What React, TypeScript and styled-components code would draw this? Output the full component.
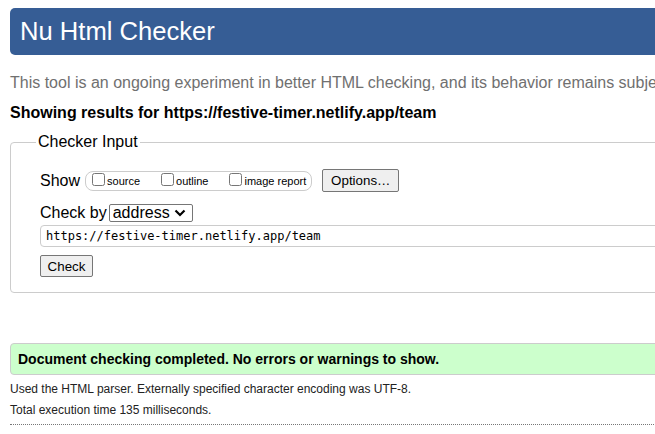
import React from 'react';
import styled, { createGlobalStyle } from 'styled-components';

const GlobalStyle = createGlobalStyle`
  html, body {
    margin: 0;
    padding: 0;
    overflow: hidden;
    background: #fff;
  }
  body {
    font-family: "Liberation Sans", Arial, sans-serif;
    color: #000;
  }
`;

const Page = styled.div`
  width: 1100px;
  padding: 8px 0 0 10px;
`;

const Title = styled.h1`
  margin: 0;
  background: #365d95;
  color: #fff;
  border-radius: 5px;
  font-size: 25.6px;
  font-weight: normal;
  line-height: 29px;
  padding: 9px 10px;
`;

const Intro = styled.p`
  margin: 19px 0 0;
  font-size: 16px;
  line-height: 18px;
  color: #707070;
  white-space: nowrap;
`;

const ResultsFor = styled.p`
  margin: 12px 0 0;
  font-size: 16px;
  line-height: 18px;
  font-weight: bold;
`;

const Fieldset = styled.fieldset`
  margin: 11px 0 0;
  padding: 18px 0 15px 29px;
  border: 1px solid #cccccc;
  border-radius: 4px;
  min-width: 0;
`;

const Legend = styled.legend`
  font-size: 16px;
  padding: 0 2px;
  margin-left: -4px;
  line-height: 18px;
`;

const Row = styled.div<{ $top?: number }>`
  display: flex;
  align-items: center;
  font-size: 16px;
  margin-top: ${({ $top }) => $top || 0}px;
`;

const RowLabel = styled.span<{ $gap?: number }>`
  font-size: 16px;
  margin-right: ${({ $gap }) => ($gap === undefined ? 5 : $gap)}px;
`;

const OptionPill = styled.span`
  display: inline-flex;
  align-items: center;
  height: 18px;
  border: 1px solid #cccccc;
  border-radius: 8px;
  padding: 0 5px 0 3px;
  font-size: 11px;
`;

const OptionLabel = styled.label<{ $gap: number }>`
  display: inline-flex;
  align-items: center;
  margin-right: ${({ $gap }) => $gap}px;
  margin-top: 1px;

  input {
    margin: 0 2px 3px 3px;
    width: 13px;
    height: 13px;
  }
`;

const Button = styled.button`
  font-family: "Liberation Sans", Arial, sans-serif;
  font-size: 13.33px;
  color: #000;
  background: #efefef;
  border: 1px solid #767676;
  border-radius: 2px;
  padding: 0 6px;
  height: 23px;
  line-height: 19px;
`;

const OptionsButton = styled(Button)`
  margin-left: 10px;
  width: 77px;
`;

const Select = styled.select`
  font-family: "Liberation Sans", Arial, sans-serif;
  font-size: 16px;
  width: 84px;
  height: 18px;
  padding: 0 0 0 3px;
  border: 1px solid #767676;
  border-radius: 2px;
  color: #000;
  background: #fff;
  appearance: none;
  background-image: url("data:image/svg+xml;utf8,<svg xmlns='http://www.w3.org/2000/svg' width='12' height='8' viewBox='0 0 12 8'><path d='M1.5 1.5 L6 6 L10.5 1.5' fill='none' stroke='black' stroke-width='2.2'/></svg>");
  background-repeat: no-repeat;
  background-position: right 6px center;
  line-height: 16px;
`;

const UrlInput = styled.input`
  display: block;
  box-sizing: border-box;
  width: 100%;
  height: 22px;
  margin: 3px 0 0;
  padding: 0 5px;
  border: 1px solid #cccccc;
  border-radius: 4px;
  font-family: "DejaVu Sans Mono", "Liberation Mono", monospace;
  font-size: 12px;
  color: #000;
`;

const CheckButton = styled(Button)`
  margin-top: 8px;
  width: 53px;
  height: 22px;
`;

const Success = styled.p`
  margin: 50px 0 0 0;
  background: #ccffcc;
  border: 1px solid #cccccc;
  border-radius: 4px;
  padding: 7px 7px;
  font-size: 14px;
  line-height: 16px;
  font-weight: bold;
`;

const Note = styled.p<{ $top: number }>`
  margin: ${({ $top }) => $top}px 0 0;
  font-size: 12px;
  line-height: 14px;
  color: #222;
`;

const Rule = styled.hr`
  margin: 7px 0 0;
  border: 0;
  border-top: 1px dotted #777;
  height: 0;
`;

const checkOptions = [
  { label: 'source', gap: 18 },
  { label: 'outline', gap: 18 },
  { label: 'image report', gap: 0 }
];

const App: React.FC = () => {
  return (
    <>
      <GlobalStyle />
      <Page>
        <Title>Nu Html Checker</Title>
        <Intro>
          This tool is an ongoing experiment in better HTML checking, and its behavior remains subject to
          change
        </Intro>
        <ResultsFor>Showing results for https://festive-timer.netlify.app/team</ResultsFor>
        <Fieldset>
          <Legend>Checker Input</Legend>
          <Row>
            <RowLabel>Show</RowLabel>
            <OptionPill>
              {checkOptions.map(opt => (
                <OptionLabel key={opt.label} $gap={opt.gap}>
                  <input type="checkbox" />
                  {opt.label}
                </OptionLabel>
              ))}
            </OptionPill>
            <OptionsButton>Options…</OptionsButton>
          </Row>
          <Row $top={12}>
            <RowLabel $gap={2}>Check by</RowLabel>
            <Select defaultValue="address">
              <option value="address">address</option>
              <option value="file">file upload</option>
              <option value="text">text input</option>
            </Select>
          </Row>
          <UrlInput defaultValue="https://festive-timer.netlify.app/team" readOnly />
          <CheckButton>Check</CheckButton>
        </Fieldset>
        <Success>Document checking completed. No errors or warnings to show.</Success>
        <Note $top={7}>Used the HTML parser. Externally specified character encoding was UTF-8.</Note>
        <Note $top={7}>Total execution time 135 milliseconds.</Note>
        <Rule />
      </Page>
    </>
  );
};

export default App;
